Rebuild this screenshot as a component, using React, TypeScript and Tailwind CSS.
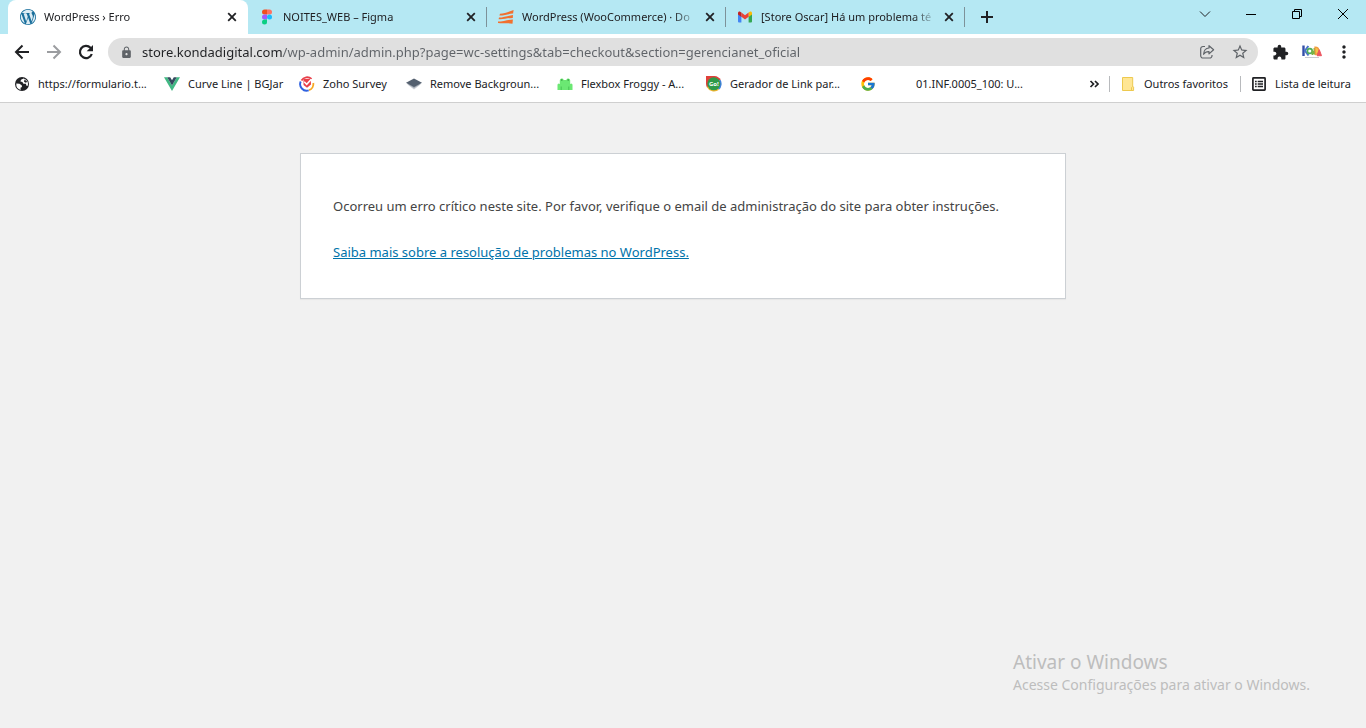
import type { ReactNode } from "react";
import { SiWordpress } from "react-icons/si";
import { FcGoogle } from "react-icons/fc";
import { MdExtension, MdLock, MdMoreVert, MdStarBorder } from "react-icons/md";

function WordPressIcon() {
  return (
    <span className="flex size-4 items-center justify-center rounded-full bg-[#dcecf4]">
      <SiWordpress size={16} color="#1a6f9c" />
    </span>
  );
}

function FigmaIcon() {
  return (
    <svg width="16" height="16" viewBox="0 0 16 16" aria-hidden="true">
      <path d="M5.500 0.500H8v5H5.500a2.500 2.500 0 0 1 0-5z" fill="#f24e1e" />
      <path d="M8 0.500h2.500a2.500 2.500 0 0 1 0 5H8z" fill="#ff7262" />
      <path d="M5.500 5.500H8v5H5.500a2.500 2.500 0 0 1 0-5z" fill="#a259ff" />
      <circle cx="10.500" cy="8" r="2.500" fill="#1abcfe" />
      <path d="M5.500 10.500H8V13a2.500 2.500 0 1 1-2.500-2.500z" fill="#0acf83" />
    </svg>
  );
}

function StripesIcon() {
  return (
    <svg width="16" height="16" viewBox="0 0 16 16" fill="#f2702e" aria-hidden="true">
      <path d="M2 4.800C6.500 4.600 11 2.600 15.600 1l-.5 3.500C10.500 4.800 6 6.800 1.400 6.600z" />
      <path d="M1 8.600C5.500 8.600 10.500 6.600 15 5.900l-.2 3C10 8.900 5 10.700.600 10.200z" />
      <path d="M0 12.600C4.500 12.600 10 10.700 14.900 10.400l-.4 4.400C10 13.700 5 14.500 0 14z" />
    </svg>
  );
}

function GmailIcon() {
  return (
    <svg width="16" height="16" viewBox="0 0 16 16" aria-hidden="true">
      <path d="M1 4.500l3.400 2.500v6.500H2a1 1 0 0 1-1-1z" fill="#4285f4" />
      <path d="M11.600 7L15 4.500v8a1 1 0 0 1-1 1h-2.400z" fill="#34a853" />
      <path d="M11.600 3.600l.9-.7C13.600 2.100 15 2.800 15 4.100v1.300L11.600 8z" fill="#fbbc04" />
      <path d="M4.400 7.800V3.500L8 6.200l3.600-2.700v4.300L8 10.500z" fill="#ea4335" />
      <path d="M1 4.100c0-1.300 1.400-2 2.500-1.200l.9.700V8L1 5.400z" fill="#c5221f" />
    </svg>
  );
}

function BackIcon() {
  return (
    <svg width="20" height="20" viewBox="0 0 20 20" fill="none" stroke="currentColor" strokeWidth="2" aria-hidden="true">
      <path d="M17 10H4.500M10.500 3.500L4 10l6.500 6.500" />
    </svg>
  );
}

function ForwardIcon() {
  return (
    <svg width="20" height="20" viewBox="0 0 20 20" fill="none" stroke="currentColor" strokeWidth="2" aria-hidden="true">
      <path d="M3 10h12.500M9.500 3.500L16 10l-6.500 6.500" />
    </svg>
  );
}

function ReloadIcon() {
  return (
    <svg width="20" height="20" viewBox="0 0 20 20" aria-hidden="true">
      <path d="M15.800 12A6.100 6.100 0 1 1 14.500 5.800l1.500 1.500" fill="none" stroke="currentColor" strokeWidth="2.200" />
      <path d="M17 3v6.300h-6.300z" fill="currentColor" />
    </svg>
  );
}

function GlobeIcon() {
  return (
    <svg width="16" height="16" viewBox="0 0 16 16" aria-hidden="true">
      <circle cx="8" cy="8" r="7" fill="#202124" />
      <path d="M2.300 7.600l3.200.2 2.200 1.400.3 1.900-1.500.6.2 2.300A6 6 0 0 1 2.300 7.600z" fill="#ffffff" />
      <path d="M9.600 2.400L7 3.700l-.6 1.900 2 .4 1 1.700 2.400.1.900 2.200 1.200-.4A6 6 0 0 0 9.600 2.400z" fill="#ffffff" />
      <path d="M10.500 3.500l2.800 2.300-1.500 1-1.800-1z" fill="#202124" />
    </svg>
  );
}

function VueIcon() {
  return (
    <svg width="16" height="16" viewBox="0 0 16 16" aria-hidden="true">
      <path d="M0 1.200h3.200L8 9.400l4.800-8.200H16L8 15z" fill="#41b883" />
      <path d="M3.200 1.200h3L8 4.300l1.800-3.100h3L8 9.400z" fill="#35495e" />
    </svg>
  );
}

function ZohoIcon() {
  return (
    <svg width="16" height="16" viewBox="0 0 16 16" fill="none" aria-hidden="true">
      <path d="M1.700 5.500a6.500 6.500 0 0 0 8 8.800" stroke="#2f62e0" strokeWidth="1.900" />
      <path d="M10 14.200A6.500 6.500 0 0 0 14.300 7" stroke="#f7a823" strokeWidth="1.900" />
      <path d="M2.500 4.500A6.500 6.500 0 0 1 12.500 3" stroke="#e8404a" strokeWidth="1.900" />
      <path d="M4.500 3h7.200l.3 5.500L8 11.800 4.500 9z" fill="#e8404a" />
      <path d="M5.200 5.800l2.500 2.500 4.600-5" stroke="#ffffff" strokeWidth="1.500" />
    </svg>
  );
}

function LayersIcon() {
  return (
    <svg width="16" height="16" viewBox="0 0 16 16" aria-hidden="true">
      <path d="M1.500 8.500h13L8 13.500z" fill="#c9cdd3" />
      <path d="M.500 7.500h15L8 12z" fill="#9ba3ae" />
      <path d="M8 2.500l8 4.300-8 4.200-8-4.200z" fill="#54606f" />
    </svg>
  );
}

function FrogIcon() {
  return (
    <svg width="16" height="16" viewBox="0 0 16 16" aria-hidden="true">
      <path
        d="M2.800 5.500V4.300a2 2 0 0 1 3.900-.3h2.600a2 2 0 0 1 3.900.3V8l1.300-.5 1 1V14H.500V8.500l1-1 1.300.5z"
        fill="#6be873"
      />
      <path d="M4.200 10.500V14M11.800 10.500V14" stroke="#48c454" />
      <circle cx="4.800" cy="4" r=".8" fill="#2f8f3a" />
      <circle cx="11.200" cy="4" r=".8" fill="#2f8f3a" />
    </svg>
  );
}

function GoIcon() {
  return (
    <svg width="16" height="16" viewBox="0 0 16 16" aria-hidden="true">
      <path d="M0 0h8.500a7.600 7.600 0 0 1 6.200 4L8 8 1 11.500A8 8 0 0 1 0 8z" fill="#e0403a" />
      <path d="M14.500 3.800a8 8 0 0 1-1.500 10L8 8z" fill="#3f7fdc" />
      <path d="M.8 11A8 8 0 0 0 13 13.800L8 8z" fill="#f0b42e" />
      <circle cx="7.800" cy="7.800" r="6.500" fill="#2f9a48" />
      <text x="7.800" y="10" textAnchor="middle" fontSize="6" fontWeight="700" fill="#ffffff" fontFamily="Open Sans, sans-serif">
        Go!
      </text>
    </svg>
  );
}

function FolderIcon() {
  return (
    <svg width="16" height="16" viewBox="0 0 16 16" aria-hidden="true">
      <path d="M2.500 1.500h10.200v8.700l.9.900v3.400H2.500z" fill="#ffe694" stroke="#edc94f" />
      <path d="M11.500 14.500v-3l1.200-1" fill="none" stroke="#edc94f" />
    </svg>
  );
}

function ReadingListIcon() {
  return (
    <svg width="16" height="16" viewBox="0 0 16 16" fill="none" stroke="#202124" aria-hidden="true">
      <rect x="1.900" y="1.900" width="12.200" height="12.200" rx=".6" strokeWidth="1.700" />
      <path d="M4 5.500h1.700M4 8h1.700M4 10.500h1.700M6.700 5.500H12M6.700 8H12M6.700 10.500H12" strokeWidth="1.400" />
    </svg>
  );
}

function ShareIcon() {
  return (
    <svg width="16" height="16" viewBox="0 0 16 16" fill="none" stroke="#5f6368" strokeWidth="1.200" strokeLinejoin="round" aria-hidden="true">
      <path d="M6 2.500H4A2.300 2.300 0 0 0 1.700 4.800v6.900A2.300 2.300 0 0 0 4 14h6.700a2.300 2.300 0 0 0 2.300-2.300V11" />
      <path d="M10 1.700l4.600 4.100L10 9.900V7.600C7.300 7.500 5.700 8.500 4.600 10.300 4.800 6.500 6.700 4.200 10 4z" />
    </svg>
  );
}

function KondaLogo() {
  return (
    <svg width="20" height="16" viewBox="0 0 20 16" fill="none" aria-hidden="true">
      <path d="M1.500 1.500v10.500" stroke="#3450a8" strokeWidth="2.400" />
      <path d="M6.300 2L3 6.800l3.500 4.700" stroke="#4a74c9" strokeWidth="2" />
      <circle cx="7.800" cy="7" r="2.400" stroke="#4fae58" strokeWidth="1.600" />
      <path d="M10.300 11V6.500l2 4V4" stroke="#7cb342" strokeWidth="1.500" />
      <path d="M13 3.200c3 0 4 1.600 3.700 3.800s-1.700 3.500-3.200 3.500z" fill="#f7c14b" stroke="#f09a3c" strokeWidth="1.300" />
      <path d="M15 11.700l2.300-6 2.200 6z" fill="#ec5560" stroke="#ec5560" strokeWidth="1" />
      <path d="M3 13.500h14" stroke="#c9cbd0" />
    </svg>
  );
}

function CloseIcon() {
  return (
    <svg width="16" height="16" viewBox="0 0 16 16" stroke="#202124" strokeWidth="1.800" aria-hidden="true">
      <path d="M4.200 4.200l7.600 7.600M11.800 4.200l-7.600 7.600" />
    </svg>
  );
}

type TabProps = { icon: ReactNode; title: string; active?: boolean; divider?: boolean };

function Tab({ icon, title, active, divider }: TabProps) {
  return (
    <div
      className={
        active
          ? "flex h-full w-60 items-center rounded-t-lg bg-white pl-3 pr-2"
          : "flex h-full w-[239px] items-center pl-[11px] pr-[7px]"
      }
    >
      <button type="button" role="tab" aria-selected={!!active} className="flex min-w-0 flex-1 items-center gap-2">
        <span className="shrink-0">{icon}</span>
        <span className="flex-1 overflow-hidden text-left whitespace-nowrap [mask-image:linear-gradient(90deg,#000_calc(100%-24px),transparent)]">
          {title}
        </span>
      </button>
      <button type="button" aria-label="Fechar guia" className="ml-1 shrink-0">
        <CloseIcon />
      </button>
      {divider && <span className="-mr-[7px] ml-[7px] h-5 w-px bg-[#7d9299]" />}
    </div>
  );
}

function Bookmark({ icon, label, width }: { icon: ReactNode; label: string; width: string }) {
  return (
    <a href="#" className={`flex shrink-0 items-center gap-2 whitespace-nowrap ${width}`}>
      <span className="w-4 shrink-0">{icon}</span>
      {label}
    </a>
  );
}

function TabStrip() {
  return (
    <header className="flex h-[34px] bg-[#b5e8f3] pl-2">
      <div role="tablist" className="flex">
        <Tab active icon={<WordPressIcon />} title="WordPress › Erro" />
        <Tab divider icon={<FigmaIcon />} title="NOITES_WEB – Figma" />
        <Tab divider icon={<StripesIcon />} title="WordPress (WooCommerce) · Do" />
        <Tab divider icon={<GmailIcon />} title="[Store Oscar] Há um problema té" />
      </div>
      <button type="button" aria-label="Nova guia" className="ml-3.5">
        <svg width="16" height="16" viewBox="0 0 16 16" stroke="#202124" strokeWidth="2" aria-hidden="true">
          <path d="M2 8h12M8 2v12" />
        </svg>
      </button>
      <div className="ml-auto flex h-7 items-center">
        <button type="button" aria-label="Pesquisar guias" className="flex w-[46px] justify-center">
          <svg width="12" height="12" viewBox="0 0 12 12" fill="none" stroke="#202124" aria-hidden="true">
            <path d="M1 3.500l5 5 5-5" />
          </svg>
        </button>
        <button type="button" aria-label="Minimizar" className="flex w-[46px] justify-center">
          <svg width="10" height="10" viewBox="0 0 10 10" stroke="#000000" aria-hidden="true">
            <path d="M0 5.500h10" />
          </svg>
        </button>
        <button type="button" aria-label="Restaurar" className="flex w-[46px] justify-center">
          <svg width="10" height="10" viewBox="0 0 10 10" fill="none" stroke="#000000" aria-hidden="true">
            <path d="M.5 2.500h7v7h-7zM2.500 2.500v-2h7v7h-2" />
          </svg>
        </button>
        <button type="button" aria-label="Fechar" className="flex w-[46px] justify-center">
          <svg width="10" height="10" viewBox="0 0 10 10" stroke="#000000" aria-hidden="true">
            <path d="M0 0l10 10M10 0L0 10" />
          </svg>
        </button>
      </div>
    </header>
  );
}

function Toolbar() {
  return (
    <div className="flex h-9 items-center pl-3">
      <button type="button" aria-label="Voltar">
        <BackIcon />
      </button>
      <button type="button" aria-label="Avançar" className="ml-3 text-[#9b9da0]">
        <ForwardIcon />
      </button>
      <button type="button" aria-label="Recarregar" className="ml-3">
        <ReloadIcon />
      </button>
      <div className="ml-3 flex h-7 flex-1 items-center rounded-full bg-[#e0e0e0] pl-3 pr-[9px] text-[#5f6368]">
        <MdLock size={13} className="shrink-0" />
        <input
          type="text"
          aria-label="Endereço"
          defaultValue="store.kondadigital.com/wp-admin/admin.php?page=wc-settings&tab=checkout&section=gerencianet_oficial"
          className="ml-[9px] min-w-0 flex-1 bg-[linear-gradient(90deg,#202124_141px,#5f6368_141px)] bg-clip-text text-[13px] text-transparent caret-black outline-none"
        />
        <button type="button" aria-label="Compartilhar">
          <ShareIcon />
        </button>
        <button type="button" aria-label="Adicionar aos favoritos" className="ml-4">
          <MdStarBorder size={18} />
        </button>
      </div>
      <button type="button" aria-label="Extensões" className="ml-3.5">
        <MdExtension size={17} />
      </button>
      <button type="button" aria-label="Perfil" className="ml-[13px]">
        <KondaLogo />
      </button>
      <button type="button" aria-label="Menu" className="mx-3">
        <MdMoreVert size={20} />
      </button>
    </div>
  );
}

function BookmarksBar() {
  return (
    <nav aria-label="Favoritos" className="flex h-[33px] items-center border-b border-[#cfcfcf] px-3.5 pb-1">
      <Bookmark width="w-[150px]" icon={<GlobeIcon />} label="https://formulario.t..." />
      <Bookmark width="w-[135px]" icon={<VueIcon />} label="Curve Line | BGJar" />
      <Bookmark width="w-[107px]" icon={<ZohoIcon />} label="Zoho Survey" />
      <Bookmark width="w-[151px]" icon={<LayersIcon />} label="Remove Backgroun..." />
      <Bookmark width="w-[149px]" icon={<FrogIcon />} label="Flexbox Froggy - A..." />
      <Bookmark width="w-[154px]" icon={<GoIcon />} label="Gerador de Link par..." />
      <a href="#" aria-label="Google" className="w-8 shrink-0">
        <FcGoogle size={16} />
      </a>
      <Bookmark width="w-[134px]" icon={null} label="01.INF.0005_100: U..." />
      <button type="button" aria-label="Mais favoritos" className="ml-auto">
        <svg width="10" height="10" viewBox="0 0 10 10" fill="none" stroke="#202124" strokeWidth="1.700" aria-hidden="true">
          <path d="M1.500 2l3 3-3 3M6 2l3 3-3 3" />
        </svg>
      </button>
      <span className="ml-2.5 h-4 w-px bg-[#b8babd]" />
      <Bookmark width="ml-2.5 w-[110px]" icon={<FolderIcon />} label="Outros favoritos" />
      <span className="ml-2.5 h-4 w-px bg-[#b8babd]" />
      <Bookmark width="ml-2.5 w-[101px]" icon={<ReadingListIcon />} label="Lista de leitura" />
    </nav>
  );
}

export default function App() {
  return (
    <div className="relative flex min-h-screen flex-col bg-[#f1f1f1] font-['Noto_Sans','Open_Sans',sans-serif] text-[11px] leading-4 text-[#202124]">
      <TabStrip />
      <div className="bg-white">
        <Toolbar />
        <BookmarksBar />
      </div>
      <main className="mx-auto mt-[50px] w-full max-w-[766px] border border-[#ccd0d4] bg-white px-8 pt-[41px] pb-[35px] text-[13px] leading-[22px] text-[#444444] shadow-[0_1px_1px_rgba(0,0,0,0.04)]">
        <p className="mb-6">
          Ocorreu um erro crítico neste site. Por favor, verifique o email de administração do site para obter instruções.
        </p>
        <p>
          <a href="#" className="text-[#0073aa] underline">
            Saiba mais sobre a resolução de problemas no WordPress.
          </a>
        </p>
      </main>
      <aside className="absolute right-14 bottom-8 text-[#bdbdbd]">
        <p className="text-[19px] leading-6">Ativar o Windows</p>
        <p className="text-sm leading-[22px]">Acesse Configurações para ativar o Windows.</p>
      </aside>
    </div>
  );
}
